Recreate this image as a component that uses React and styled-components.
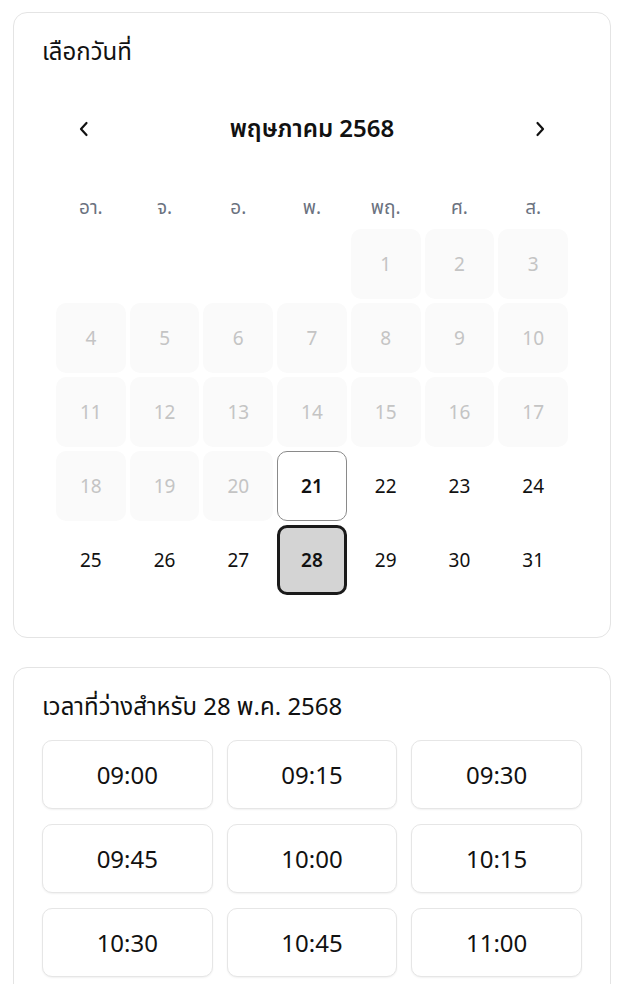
import styled, { createGlobalStyle } from "styled-components";

const GlobalStyle = createGlobalStyle`
  html, body {
    margin: 0;
    padding: 0;
    background: #fff;
  }
  body {
    font-family: "Noto Sans", "Noto Sans Thai", "Open Sans", sans-serif;
    color: #111;
  }
`;

const weekdays = ["อา.", "จ.", "อ.", "พ.", "พฤ.", "ศ.", "ส."];
const slots = [
  "09:00", "09:15", "09:30",
  "09:45", "10:00", "10:15",
  "10:30", "10:45", "11:00",
];

// May 2568 starts on Thursday, days before 21 are gone
const TODAY = 21;
const SELECTED = 28;
const LEAD = 4;

const ChevronLeft = () => (
  <svg width="14" height="18" viewBox="0 0 14 18" fill="none">
    <path d="M9.5 3L4 9l5.5 6" stroke="#111" strokeWidth="2.2" strokeLinecap="round" strokeLinejoin="round" />
  </svg>
);

const ChevronRight = () => (
  <svg width="14" height="18" viewBox="0 0 14 18" fill="none">
    <path d="M4.5 3L10 9l-5.5 6" stroke="#111" strokeWidth="2.2" strokeLinecap="round" strokeLinejoin="round" />
  </svg>
);

const App = () => {
  const cells = [];
  for (let i = 0; i < LEAD; i++) cells.push(null);
  for (let d = 1; d <= 31; d++) cells.push(d);

  return (
    <>
      <GlobalStyle />
      <Page>
        <Card $bottom={42}>
          <Title>เลือกวันที่</Title>
          <Calendar>
            <MonthBar>
              <NavButton aria-label="previous">
                <ChevronLeft />
              </NavButton>
              <MonthName>พฤษภาคม 2568</MonthName>
              <NavButton aria-label="next">
                <ChevronRight />
              </NavButton>
            </MonthBar>
            <Weekdays>
              {weekdays.map((w) => (
                <Weekday key={w}>{w}</Weekday>
              ))}
            </Weekdays>
            <Days>
              {cells.map((d, i) =>
                d === null ? (
                  <Blank key={"b" + i} />
                ) : (
                  <Day
                    key={d}
                    $disabled={d < TODAY}
                    $today={d === TODAY}
                    $selected={d === SELECTED}
                  >
                    {d}
                  </Day>
                )
              )}
            </Days>
          </Calendar>
        </Card>

        <Card $bottom={24}>
          <Title>เวลาที่ว่างสำหรับ 28 พ.ค. 2568</Title>
          <Slots>
            {slots.map((s) => (
              <Slot key={s}>{s}</Slot>
            ))}
          </Slots>
        </Card>
      </Page>
    </>
  );
};

const Page = styled.div`
  display: flex;
  flex-direction: column;
  gap: 29px;
  width: 598px;
  padding: 12px 0 0 13px;
`;

const Card = styled.section`
  border: 1px solid #e4e4e4;
  border-radius: 14px;
  background: #fff;
  padding: 24px 28px ${(p) => p.$bottom}px;
`;

const Title = styled.h2`
  margin: 0;
  font-size: 24px;
  font-weight: 400;
  line-height: 28px;
`;

const Calendar = styled.div`
  max-width: 512px;
  margin: 44px auto 0;
`;

const MonthBar = styled.div`
  display: flex;
  align-items: center;
  justify-content: space-between;
  height: 40px;
  padding: 0 8px;
`;

const NavButton = styled.button`
  display: flex;
  align-items: center;
  justify-content: center;
  width: 40px;
  height: 40px;
  border: none;
  background: none;
  padding: 0;
  cursor: pointer;
`;

const MonthName = styled.div`
  font-size: 24px;
  font-weight: 600;
`;

const Weekdays = styled.div`
  display: grid;
  grid-template-columns: repeat(7, 1fr);
  gap: 4px;
  margin-top: 46px;
`;

const Weekday = styled.div`
  text-align: center;
  font-size: 19px;
  line-height: 24px;
  color: #6b7280;
`;

const Days = styled.div`
  display: grid;
  grid-template-columns: repeat(7, 1fr);
  gap: 4px;
  margin-top: 10px;
`;

const Blank = styled.div`
  height: 70px;
`;

const Day = styled.button`
  display: flex;
  align-items: center;
  justify-content: center;
  height: 70px;
  padding: 0;
  font-family: inherit;
  font-size: 19px;
  border-radius: 10px;
  cursor: ${(p) => (p.$disabled ? "default" : "pointer")};
  color: ${(p) => (p.$disabled ? "#c4c4c4" : "#111")};
  font-weight: ${(p) => (p.$today || p.$selected ? 600 : 400)};
  background: ${(p) =>
    p.$selected ? "#d4d4d4" : p.$disabled ? "#fafafa" : "transparent"};
  border: ${(p) =>
    p.$selected
      ? "3px solid #1a1a1a"
      : p.$today
      ? "1px solid #8a8a8a"
      : "1px solid transparent"};
`;

const Slots = styled.div`
  display: grid;
  grid-template-columns: repeat(3, 1fr);
  column-gap: 14px;
  row-gap: 15px;
  margin-top: 20px;
`;

const Slot = styled.button`
  height: 69px;
  border: 1px solid #e6e6e6;
  border-radius: 10px;
  background: #fff;
  box-shadow: 0 1px 2px rgba(0, 0, 0, 0.06);
  font-family: inherit;
  font-size: 24px;
  color: #111;
  cursor: pointer;
`;

export default App;
